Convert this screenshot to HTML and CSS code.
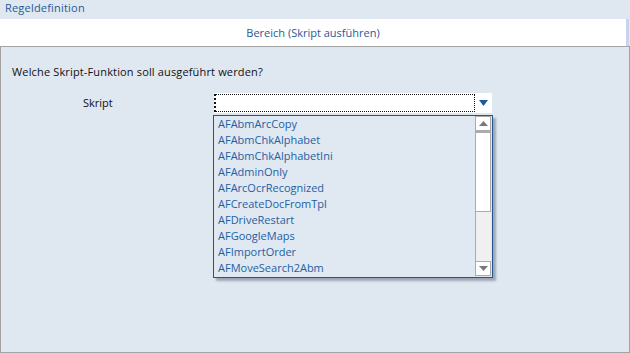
FILE: index.html
```html
<!DOCTYPE html>
<html lang="de">
<head>
    <meta charset="UTF-8">
    <title>Regeldefinition</title>
    <link rel="stylesheet" href="styles.css">
</head>
<body>

<div class="header">Regeldefinition</div>

<div class="tabbar">
    <div class="tab">Bereich (Skript ausführen)</div>
    <div class="tab-edge"></div>
</div>

<div class="panel">
    <p class="question">Welche Skript-Funktion soll ausgeführt werden?</p>

    <div class="row">
        <label class="row-label" for="script">Skript</label>
        <div class="combo">
            <div class="combo-field" id="script"></div>
            <div class="combo-arrow">
                <svg width="9" height="6" viewBox="0 0 9 6"><path d="M0 0h9L4.5 6z" fill="#1d5a9c"/></svg>
            </div>

            <!-- open dropdown list -->
            <div class="dropdown">
                <ul class="options">
                    <li>AFAbmArcCopy</li>
                    <li>AFAbmChkAlphabet</li>
                    <li>AFAbmChkAlphabetIni</li>
                    <li>AFAdminOnly</li>
                    <li>AFArcOcrRecognized</li>
                    <li>AFCreateDocFromTpl</li>
                    <li>AFDriveRestart</li>
                    <li>AFGoogleMaps</li>
                    <li>AFImportOrder</li>
                    <li>AFMoveSearch2Abm</li>
                </ul>
                <div class="scrollbar">
                    <div class="sb-btn">
                        <svg width="9" height="5" viewBox="0 0 9 5"><path d="M4.5 0L9 5H0z" fill="#7a7a7a"/></svg>
                    </div>
                    <div class="sb-thumb"></div>
                    <div class="sb-track"></div>
                    <div class="sb-btn">
                        <svg width="9" height="5" viewBox="0 0 9 5"><path d="M0 0h9L4.5 5z" fill="#7a7a7a"/></svg>
                    </div>
                </div>
            </div>
        </div>
    </div>
</div>

</body>
</html>
```

FILE: styles.css
```css
body {
    margin: 0;
    font-family: "Open Sans", "Noto Sans", sans-serif;
    font-size: 11px;
    background: #dfe7f1;
}

.header {
    height: 19px;
    line-height: 16px;
    padding-left: 5px;
    color: #1f5a98;
    background: #dfe7f1;
    letter-spacing: 0.2px;
}

.tabbar {
    display: flex;
    height: 27px;
}

.tab {
    flex: 1;
    background: #fff;
    color: #1f5a98;
    text-align: center;
    line-height: 27px;
}

.tab-edge {
    width: 3px;
    background: #c8d3ec;
    margin-right: 1px;
}

.panel {
    height: 307px;
    box-sizing: border-box;
    border: 1px solid #a3a3a3;
    background: #dfe7f1;
    color: #111;
}

.question {
    margin: 17px 0 0 11px;
    line-height: 16px;
    letter-spacing: 0.15px;
}

.row {
    display: flex;
    margin-top: 13px;
}

.row-label {
    width: 213px;
    box-sizing: border-box;
    padding-left: 82px;
    line-height: 20px;
}

.combo {
    position: relative;
    display: flex;
    width: 278px;
    height: 20px;
    background: #fff;
}

.combo-field {
    flex: 1;
    margin: 1px 0;
    border: 1px dotted #111;
    border-left-width: 2px;
}

.combo-arrow {
    width: 17px;
    display: flex;
    align-items: center;
    justify-content: center;
    padding-bottom: 1px;
}

.dropdown {
    position: absolute;
    left: -1px;
    top: 22px;
    width: 280px;
    height: 163px;
    box-sizing: border-box;
    border: 1px solid #245489;
    background: #e0e8f2;
    display: flex;
    box-shadow: 3px 3px 2px rgba(80, 90, 110, 0.45);
}

.options {
    flex: 1;
    list-style: none;
    margin: 0;
    padding: 0;
}

.options li {
    height: 16px;
    line-height: 16px;
    padding-left: 4px;
    color: #1f5fa3;
}

.scrollbar {
    width: 16px;
    margin: 0 1px 1px 0;
    display: flex;
    flex-direction: column;
}

.sb-btn {
    height: 15px;
    box-sizing: border-box;
    border: 1px solid #ababab;
    background: #fff;
    display: flex;
    align-items: center;
    justify-content: center;
}

.sb-thumb {
    height: 78px;
    border: 1px solid #ababab;
    border-top-width: 2px;
    background: #fff;
}

.sb-track {
    flex: 1;
    background: #f0f0f0;
    border-left: 1px solid #ababab;
}
```
